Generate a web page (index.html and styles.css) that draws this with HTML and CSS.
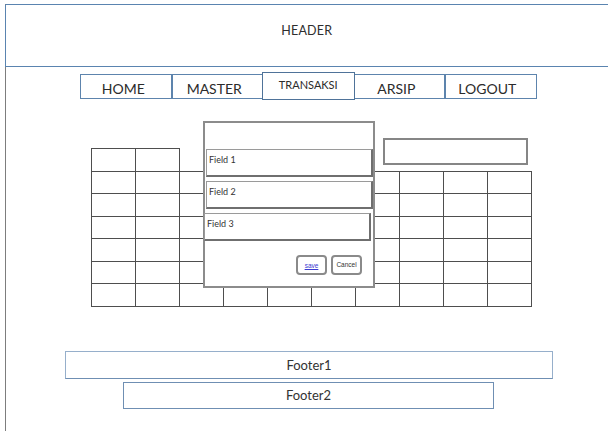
FILE: index.html
```html
<!DOCTYPE html>
<html lang="id">
<head>
<meta charset="utf-8">
<title>Transaksi</title>
<link rel="stylesheet" href="styles.css">
</head>
<body>
<div class="frame">
  <header class="site-header">HEADER</header>

  <nav class="menu">
    <a class="menu-item">HOME</a>
    <a class="menu-item">MASTER</a>
    <a class="menu-item active">TRANSAKSI</a>
    <a class="menu-item">ARSIP</a>
    <a class="menu-item">LOGOUT</a>
  </nav>

  <main class="workspace">
    <table class="data-grid">
      <tr class="head-row">
        <td class="cell"></td><td class="cell"></td>
        <td></td><td></td><td></td><td></td><td></td><td></td><td></td><td></td>
      </tr>
      <tr><td class="cell"></td><td class="cell"></td><td class="cell"></td><td class="cell"></td><td class="cell"></td><td class="cell"></td><td class="cell"></td><td class="cell"></td><td class="cell"></td><td class="cell"></td></tr>
      <tr><td class="cell"></td><td class="cell"></td><td class="cell"></td><td class="cell"></td><td class="cell"></td><td class="cell"></td><td class="cell"></td><td class="cell"></td><td class="cell"></td><td class="cell"></td></tr>
      <tr><td class="cell"></td><td class="cell"></td><td class="cell"></td><td class="cell"></td><td class="cell"></td><td class="cell"></td><td class="cell"></td><td class="cell"></td><td class="cell"></td><td class="cell"></td></tr>
      <tr><td class="cell"></td><td class="cell"></td><td class="cell"></td><td class="cell"></td><td class="cell"></td><td class="cell"></td><td class="cell"></td><td class="cell"></td><td class="cell"></td><td class="cell"></td></tr>
      <tr><td class="cell"></td><td class="cell"></td><td class="cell"></td><td class="cell"></td><td class="cell"></td><td class="cell"></td><td class="cell"></td><td class="cell"></td><td class="cell"></td><td class="cell"></td></tr>
      <tr><td class="cell"></td><td class="cell"></td><td class="cell"></td><td class="cell"></td><td class="cell"></td><td class="cell"></td><td class="cell"></td><td class="cell"></td><td class="cell"></td><td class="cell"></td></tr>
    </table>

    <div class="search-box"></div>

    <div class="dialog">
      <div class="dialog-title"></div>
      <div class="field">Field 1</div>
      <div class="field">Field 2</div>
      <div class="field field-last">Field 3</div>
      <div class="dialog-actions">
        <button class="btn btn-save">save</button>
        <button class="btn">Cancel</button>
      </div>
    </div>
  </main>

  <footer class="footer">
    <div class="footer-one">Footer1</div>
    <div class="footer-two">Footer2</div>
  </footer>
</div>
</body>
</html>
```

FILE: styles.css
```css
html, body {
  margin: 0;
  padding: 0;
  background: #ffffff;
}

body {
  font-family: Lato, "Open Sans", "Liberation Sans", sans-serif;
  color: #222;
  overflow: hidden;
}

/* outer page frame: top and left edges only */
.frame {
  margin: 4px 0 0 5px;
  border-top: 1.5px solid #5a84b0;
  border-left: 1.5px solid #7d7d7d;
  height: 440px;
}

.site-header {
  box-sizing: border-box;
  height: 62px;
  border-bottom: 1.5px solid #5a84b0;
  border-left: 1.5px solid #5a84b0;
  margin-left: -1.5px;
  padding-top: 18px;
  text-align: center;
  font-size: 12.5px;
  color: #2e2e2e;
  letter-spacing: 0.2px;
}

/* top menu */
.menu {
  display: flex;
  margin: 7px 0 0 74px;
  height: 25px;
}

.menu-item {
  box-sizing: border-box;
  width: 92.5px;
  height: 25px;
  border: 1.5px solid #5d84ad;
  margin-right: -1.5px;
  display: flex;
  align-items: center;
  justify-content: center;
  padding: 3px 6px 0 0;
  font-size: 14px;
  color: #2b2b2b;
}

.menu-item.active {
  height: 28px;
  margin-top: -2px;
  border-color: #4f7399;
  align-items: flex-start;
  padding: 5px 0 0 0;
  font-size: 11px;
  position: relative;
  z-index: 1;
  background: #fff;
}

/* work area with the grid and the dialog over it */
.workspace {
  position: relative;
  box-sizing: border-box;
  height: 252px;
  padding: 49px 0 0 85px;
}

.data-grid {
  border-collapse: collapse;
  table-layout: fixed;
}

.data-grid td {
  width: 44px;
  height: 22.5px;
  padding: 0;
  box-sizing: border-box;
}

.data-grid td.cell {
  border: 1.5px solid #4e4e4e;
}

.search-box {
  position: absolute;
  left: 377px;
  top: 39px;
  width: 145px;
  height: 27px;
  box-sizing: border-box;
  border: 2px solid #868686;
  background: #fff;
}

.dialog {
  position: absolute;
  left: 197px;
  top: 22px;
  width: 172px;
  height: 167px;
  box-sizing: border-box;
  border: 2px solid #8c8c8c;
  background: #fff;
  display: flex;
  flex-direction: column;
}

.dialog-title {
  height: 26px;
  flex: none;
}

.field {
  box-sizing: border-box;
  flex: none;
  height: 28px;
  margin: 0 0 4px 1px;
  width: 167px;
  border: 1.5px solid #9a9a9a;
  border-right: 2px solid #6f6f6f;
  border-bottom: 2px solid #6f6f6f;
  padding: 4px 0 0 2px;
  font-size: 9px;
  color: #333;
}

.field-last {
  margin-left: -1px;
}

.dialog-actions {
  display: flex;
  justify-content: flex-end;
  gap: 4px;
  margin: 10px 11px 0 0;
}

.btn {
  box-sizing: border-box;
  width: 31px;
  height: 20px;
  border: 2px solid #8a8a8a;
  border-radius: 4px;
  background: #fff;
  font-family: "Liberation Sans", Arial, sans-serif;
  font-size: 6.5px;
  color: #333;
  padding: 4px 0 0 0;
  display: flex;
  align-items: flex-start;
  justify-content: center;
}

.btn-save {
  color: #3a3ad0;
  text-decoration: underline;
  padding-top: 5px;
}

/* footers */
.footer-one,
.footer-two {
  box-sizing: border-box;
  text-align: center;
  font-size: 13px;
  color: #333;
  border: 1.5px solid #96afcb;
  border-bottom-color: #6f8fb3;
}

.footer-one {
  margin-left: 59px;
  width: 488px;
  height: 28px;
  padding-top: 5px;
}

.footer-two {
  margin: 3px 0 0 117px;
  width: 371px;
  height: 27px;
  padding-top: 4px;
  border-color: #6f8fb3;
}
```
